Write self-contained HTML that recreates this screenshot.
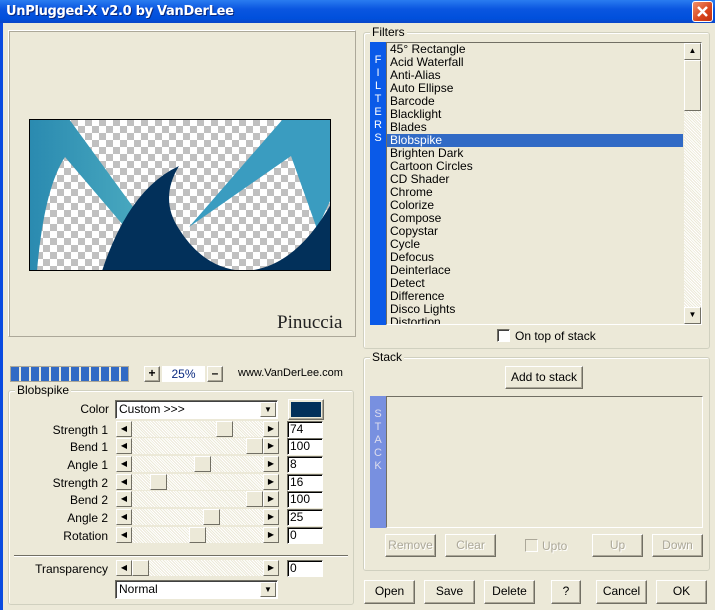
<!DOCTYPE html>
<html><head><meta charset="utf-8"><style>
*{box-sizing:border-box;margin:0;padding:0}
body{width:715px;height:610px;overflow:hidden;background:#0a4be0;font-family:Tahoma,"Liberation Sans",sans-serif;font-size:11px;color:#000;position:relative}
.a{position:absolute}
#title{left:0;top:0;width:715px;height:23px;background:linear-gradient(#2a7cf0,#0a56e0 40%,#0050dc 80%,#0a46c8);}
#title span{position:absolute;left:6px;top:4px;color:#fff;font-weight:bold;font-size:13px;font-family:"DejaVu Sans","Liberation Sans",sans-serif;letter-spacing:-0.3px;text-shadow:1px 1px #0a2a80}
#close{left:692px;top:1px;width:21px;height:21px;border:1px solid #fff;border-radius:3px;background:linear-gradient(135deg,#f0906a,#d8441c 60%,#c03010);}
#body{left:3px;top:23px;width:712px;height:587px;background:#ece9d8}
.grp{position:absolute;border:1px solid #d0d0bf;border-radius:3px;box-shadow:inset 1px 1px #fff}
.gl{position:absolute;top:-8px;left:6px;background:#ece9d8;padding:0 2px}
.sunk{position:absolute;border:1px solid;border-color:#aca899 #fff #fff #aca899;box-shadow:inset 1px 1px #716f64}
.btn{position:absolute;background:#ece9d8;border:1px solid;border-color:#fff #716f64 #716f64 #fff;box-shadow:inset -1px -1px #aca899;text-align:center;font-size:12px;line-height:20px}
.dis{color:#aca899;text-shadow:1px 1px #fff}
.lbl{position:absolute;width:100px;text-align:right;font-size:12px}
.sl{position:absolute;height:16px;background:repeating-linear-gradient(45deg,#ece9d8 0 1px,#fff 1px 2px)}
.ar{position:absolute;top:0;width:16px;height:16px;background:#ece9d8;border:1px solid;border-color:#fff #716f64 #716f64 #fff;font-size:8px;line-height:14px;text-align:center}
.th{position:absolute;top:0;width:17px;height:16px;background:#ece9d8;border:1px solid;border-color:#fff #716f64 #716f64 #fff}
.ed{position:absolute;height:17px;background:#fff;border:1px solid;border-color:#716f64 #fff #fff #716f64;box-shadow:inset 1px 1px #000;font-size:12px;padding-left:2px;line-height:15px}
.cb{position:absolute;height:19px;background:#fff;border:1px solid;border-color:#716f64 #fff #fff #716f64;box-shadow:inset 1px 1px #404040;font-size:12px;padding-left:3px;line-height:17px}
.cb i{position:absolute;right:1px;top:1px;width:16px;height:15px;background:#ece9d8;border:1px solid;border-color:#fff #716f64 #716f64 #fff;font-style:normal;font-size:8px;text-align:center;line-height:13px}
.it{height:13px;line-height:13px;padding-left:3px;font-size:12px;white-space:nowrap}
.strip{position:absolute;color:#fff;font-size:11px;text-align:center;line-height:13px;font-family:"Liberation Sans",sans-serif}
</style></head><body>
<div id="title" class="a"><span>UnPlugged-X v2.0 by VanDerLee</span></div>
<div id="close" class="a"><svg width="19" height="19"><path d="M5 5L14 14M14 5L5 14" stroke="#fff" stroke-width="2.5"/></svg></div>
<div id="body" class="a"></div>

<div class="sunk" style="left:8px;top:30px;width:348px;height:307px;border-color:#fff #aca899 #aca899 #fff;box-shadow:inset 1px 1px #aca899"></div>
<svg class="a" style="left:29px;top:119px" width="302" height="152" viewBox="0 0 302 152">
<defs><pattern id="ck" width="14" height="14" patternUnits="userSpaceOnUse"><rect width="14" height="14" fill="#fff"/><rect width="7" height="7" fill="#c0c0c0"/><rect x="7" y="7" width="7" height="7" fill="#c0c0c0"/></pattern>
<linearGradient id="lb" x1="0" x2="1"><stop offset="0" stop-color="#2a8ab0"/><stop offset="1" stop-color="#4aaac0"/></linearGradient></defs>
<rect width="302" height="152" fill="url(#ck)"/>
<path d="M0 0L40 0L115 103L100 113L36 38Q15 70 8 152L0 152Z" fill="url(#lb)"/>
<path d="M254 0L302 0L302 80L288 110L262 37L160 108Z" fill="#3a9cc0"/>
<path d="M73 152Q100 70 150 47Q130 80 150 110Q175 150 215 152Q265 150 302 85L302 152Z" fill="#02305a"/>
<rect x="0.5" y="0.5" width="301" height="151" fill="none" stroke="#000"/>
</svg>
<div class="a" style="left:277px;top:312px;font-family:'Liberation Serif',serif;font-size:19px;color:#222">Pinuccia</div>

<div class="sunk" style="left:10px;top:366px;width:119px;height:16px;background:repeating-linear-gradient(90deg,#316ac5 0 8px,#ece9d8 8px 10px);border:1px solid #aca899;box-shadow:none"></div>
<div class="btn" style="left:144px;top:366px;width:16px;height:16px;line-height:13px;font-weight:bold">+</div>
<div class="a" style="left:162px;top:366px;width:43px;height:16px;background:#fff;color:#0a2a80;text-align:center;font-size:12px;line-height:16px">25%</div>
<div class="btn" style="left:207px;top:366px;width:16px;height:16px;line-height:13px;font-weight:bold">–</div>
<div class="a" style="left:238px;top:367px;font-size:11px">www.VanDerLee.com</div>

<div class="grp" style="left:8px;top:390px;width:346px;height:215px"><div class="gl" style="font-size:12px">Blobspike</div></div>
<div class="lbl" style="left:9px;top:402px">Color</div>
<div class="cb" style="left:115px;top:400px;width:163px">Custom &gt;&gt;&gt;<i>▼</i></div>
<div class="btn" style="left:288px;top:399px;width:36px;height:21px;padding:2px"><div style="width:100%;height:100%;background:#02305a"></div></div>

<div class="lbl" style="left:8px;top:423px">Strength 1</div>
<div class="sl" style="left:116px;top:421px;width:163px"><div class="ar" style="left:0">◀</div><div class="th" style="left:100px"></div><div class="ar" style="right:0">▶</div></div>
<div class="ed" style="left:287px;top:421px;width:36px">74</div>
<div class="lbl" style="left:8px;top:440px">Bend 1</div>
<div class="sl" style="left:116px;top:438px;width:163px"><div class="ar" style="left:0">◀</div><div class="th" style="left:130px"></div><div class="ar" style="right:0">▶</div></div>
<div class="ed" style="left:287px;top:438px;width:36px">100</div>
<div class="lbl" style="left:8px;top:458px">Angle 1</div>
<div class="sl" style="left:116px;top:456px;width:163px"><div class="ar" style="left:0">◀</div><div class="th" style="left:78px"></div><div class="ar" style="right:0">▶</div></div>
<div class="ed" style="left:287px;top:456px;width:36px">8</div>
<div class="lbl" style="left:8px;top:476px">Strength 2</div>
<div class="sl" style="left:116px;top:474px;width:163px"><div class="ar" style="left:0">◀</div><div class="th" style="left:34px"></div><div class="ar" style="right:0">▶</div></div>
<div class="ed" style="left:287px;top:474px;width:36px">16</div>
<div class="lbl" style="left:8px;top:493px">Bend 2</div>
<div class="sl" style="left:116px;top:491px;width:163px"><div class="ar" style="left:0">◀</div><div class="th" style="left:130px"></div><div class="ar" style="right:0">▶</div></div>
<div class="ed" style="left:287px;top:491px;width:36px">100</div>
<div class="lbl" style="left:8px;top:511px">Angle 2</div>
<div class="sl" style="left:116px;top:509px;width:163px"><div class="ar" style="left:0">◀</div><div class="th" style="left:87px"></div><div class="ar" style="right:0">▶</div></div>
<div class="ed" style="left:287px;top:509px;width:36px">25</div>
<div class="lbl" style="left:8px;top:529px">Rotation</div>
<div class="sl" style="left:116px;top:527px;width:163px"><div class="ar" style="left:0">◀</div><div class="th" style="left:73px"></div><div class="ar" style="right:0">▶</div></div>
<div class="ed" style="left:287px;top:527px;width:36px">0</div>

<div class="a" style="left:14px;top:555px;width:334px;height:2px;background:#716f64;border-bottom:1px solid #fff"></div>
<div class="lbl" style="left:8px;top:562px">Transparency</div>
<div class="sl" style="left:116px;top:560px;width:163px"><div class="ar" style="left:0">◀</div><div class="th" style="left:16px"></div><div class="ar" style="right:0">▶</div></div>
<div class="ed" style="left:287px;top:560px;width:36px">0</div>
<div class="cb" style="left:115px;top:580px;width:163px">Normal<i>▼</i></div>

<div class="grp" style="left:363px;top:32px;width:347px;height:317px"><div class="gl" style="font-size:12px">Filters</div></div>
<div class="strip" style="left:370px;top:42px;width:16px;height:283px;background:#0a5ae8;padding-top:12px">F<br>I<br>L<br>T<br>E<br>R<br>S</div>
<div class="a" style="left:386px;top:42px;width:316px;height:283px;border:1px solid;border-color:#716f64 #fff #fff #716f64;overflow:hidden">
<div style="width:296px">
<div class="it">45° Rectangle</div><div class="it">Acid Waterfall</div><div class="it">Anti-Alias</div><div class="it">Auto Ellipse</div><div class="it">Barcode</div><div class="it">Blacklight</div><div class="it">Blades</div>
<div class="it" style="background:#316ac5;color:#fff">Blobspike</div>
<div class="it">Brighten Dark</div><div class="it">Cartoon Circles</div><div class="it">CD Shader</div><div class="it">Chrome</div><div class="it">Colorize</div><div class="it">Compose</div><div class="it">Copystar</div><div class="it">Cycle</div><div class="it">Defocus</div><div class="it">Deinterlace</div><div class="it">Detect</div><div class="it">Difference</div><div class="it">Disco Lights</div><div class="it">Distortion</div>
</div>
<div class="a" style="left:297px;top:0;width:17px;height:281px;background:repeating-linear-gradient(45deg,#ece9d8 0 1px,#fff 1px 2px)">
<div class="ar" style="left:0;top:0;width:17px;height:17px">▲</div>
<div class="th" style="left:0;top:17px;height:51px"></div>
<div class="ar" style="left:0;top:264px;width:17px;height:17px">▼</div></div>
</div>
<div class="a" style="left:497px;top:329px;width:13px;height:13px;background:#fff;border:1px solid;border-color:#716f64 #fff #fff #716f64;box-shadow:inset 1px 1px #404040"></div>
<div class="a" style="left:515px;top:329px;font-size:12px">On top of stack</div>

<div class="grp" style="left:363px;top:357px;width:347px;height:214px"><div class="gl" style="font-size:12px">Stack</div></div>
<div class="btn" style="left:505px;top:366px;width:78px;height:23px">Add to stack</div>
<div class="strip" style="left:370px;top:396px;width:16px;height:132px;background:#7890e0;padding-top:12px;color:#dde">S<br>T<br>A<br>C<br>K</div>
<div class="a" style="left:386px;top:396px;width:317px;height:132px;border:1px solid;border-color:#716f64 #fff #fff #716f64"></div>
<div class="btn dis" style="left:385px;top:534px;width:51px;height:23px">Remove</div>
<div class="btn dis" style="left:445px;top:534px;width:51px;height:23px">Clear</div>
<div class="a" style="left:525px;top:539px;width:13px;height:13px;border:1px solid;border-color:#aca899 #fff #fff #aca899"></div>
<div class="a dis" style="left:542px;top:539px;font-size:12px">Upto</div>
<div class="btn dis" style="left:592px;top:534px;width:51px;height:23px">Up</div>
<div class="btn dis" style="left:652px;top:534px;width:51px;height:23px">Down</div>

<div class="btn" style="left:364px;top:580px;width:51px;height:24px">Open</div>
<div class="btn" style="left:424px;top:580px;width:51px;height:24px">Save</div>
<div class="btn" style="left:484px;top:580px;width:51px;height:24px">Delete</div>
<div class="btn" style="left:551px;top:580px;width:30px;height:24px">?</div>
<div class="btn" style="left:596px;top:580px;width:51px;height:24px">Cancel</div>
<div class="btn" style="left:656px;top:580px;width:51px;height:24px">OK</div>
</body></html>
